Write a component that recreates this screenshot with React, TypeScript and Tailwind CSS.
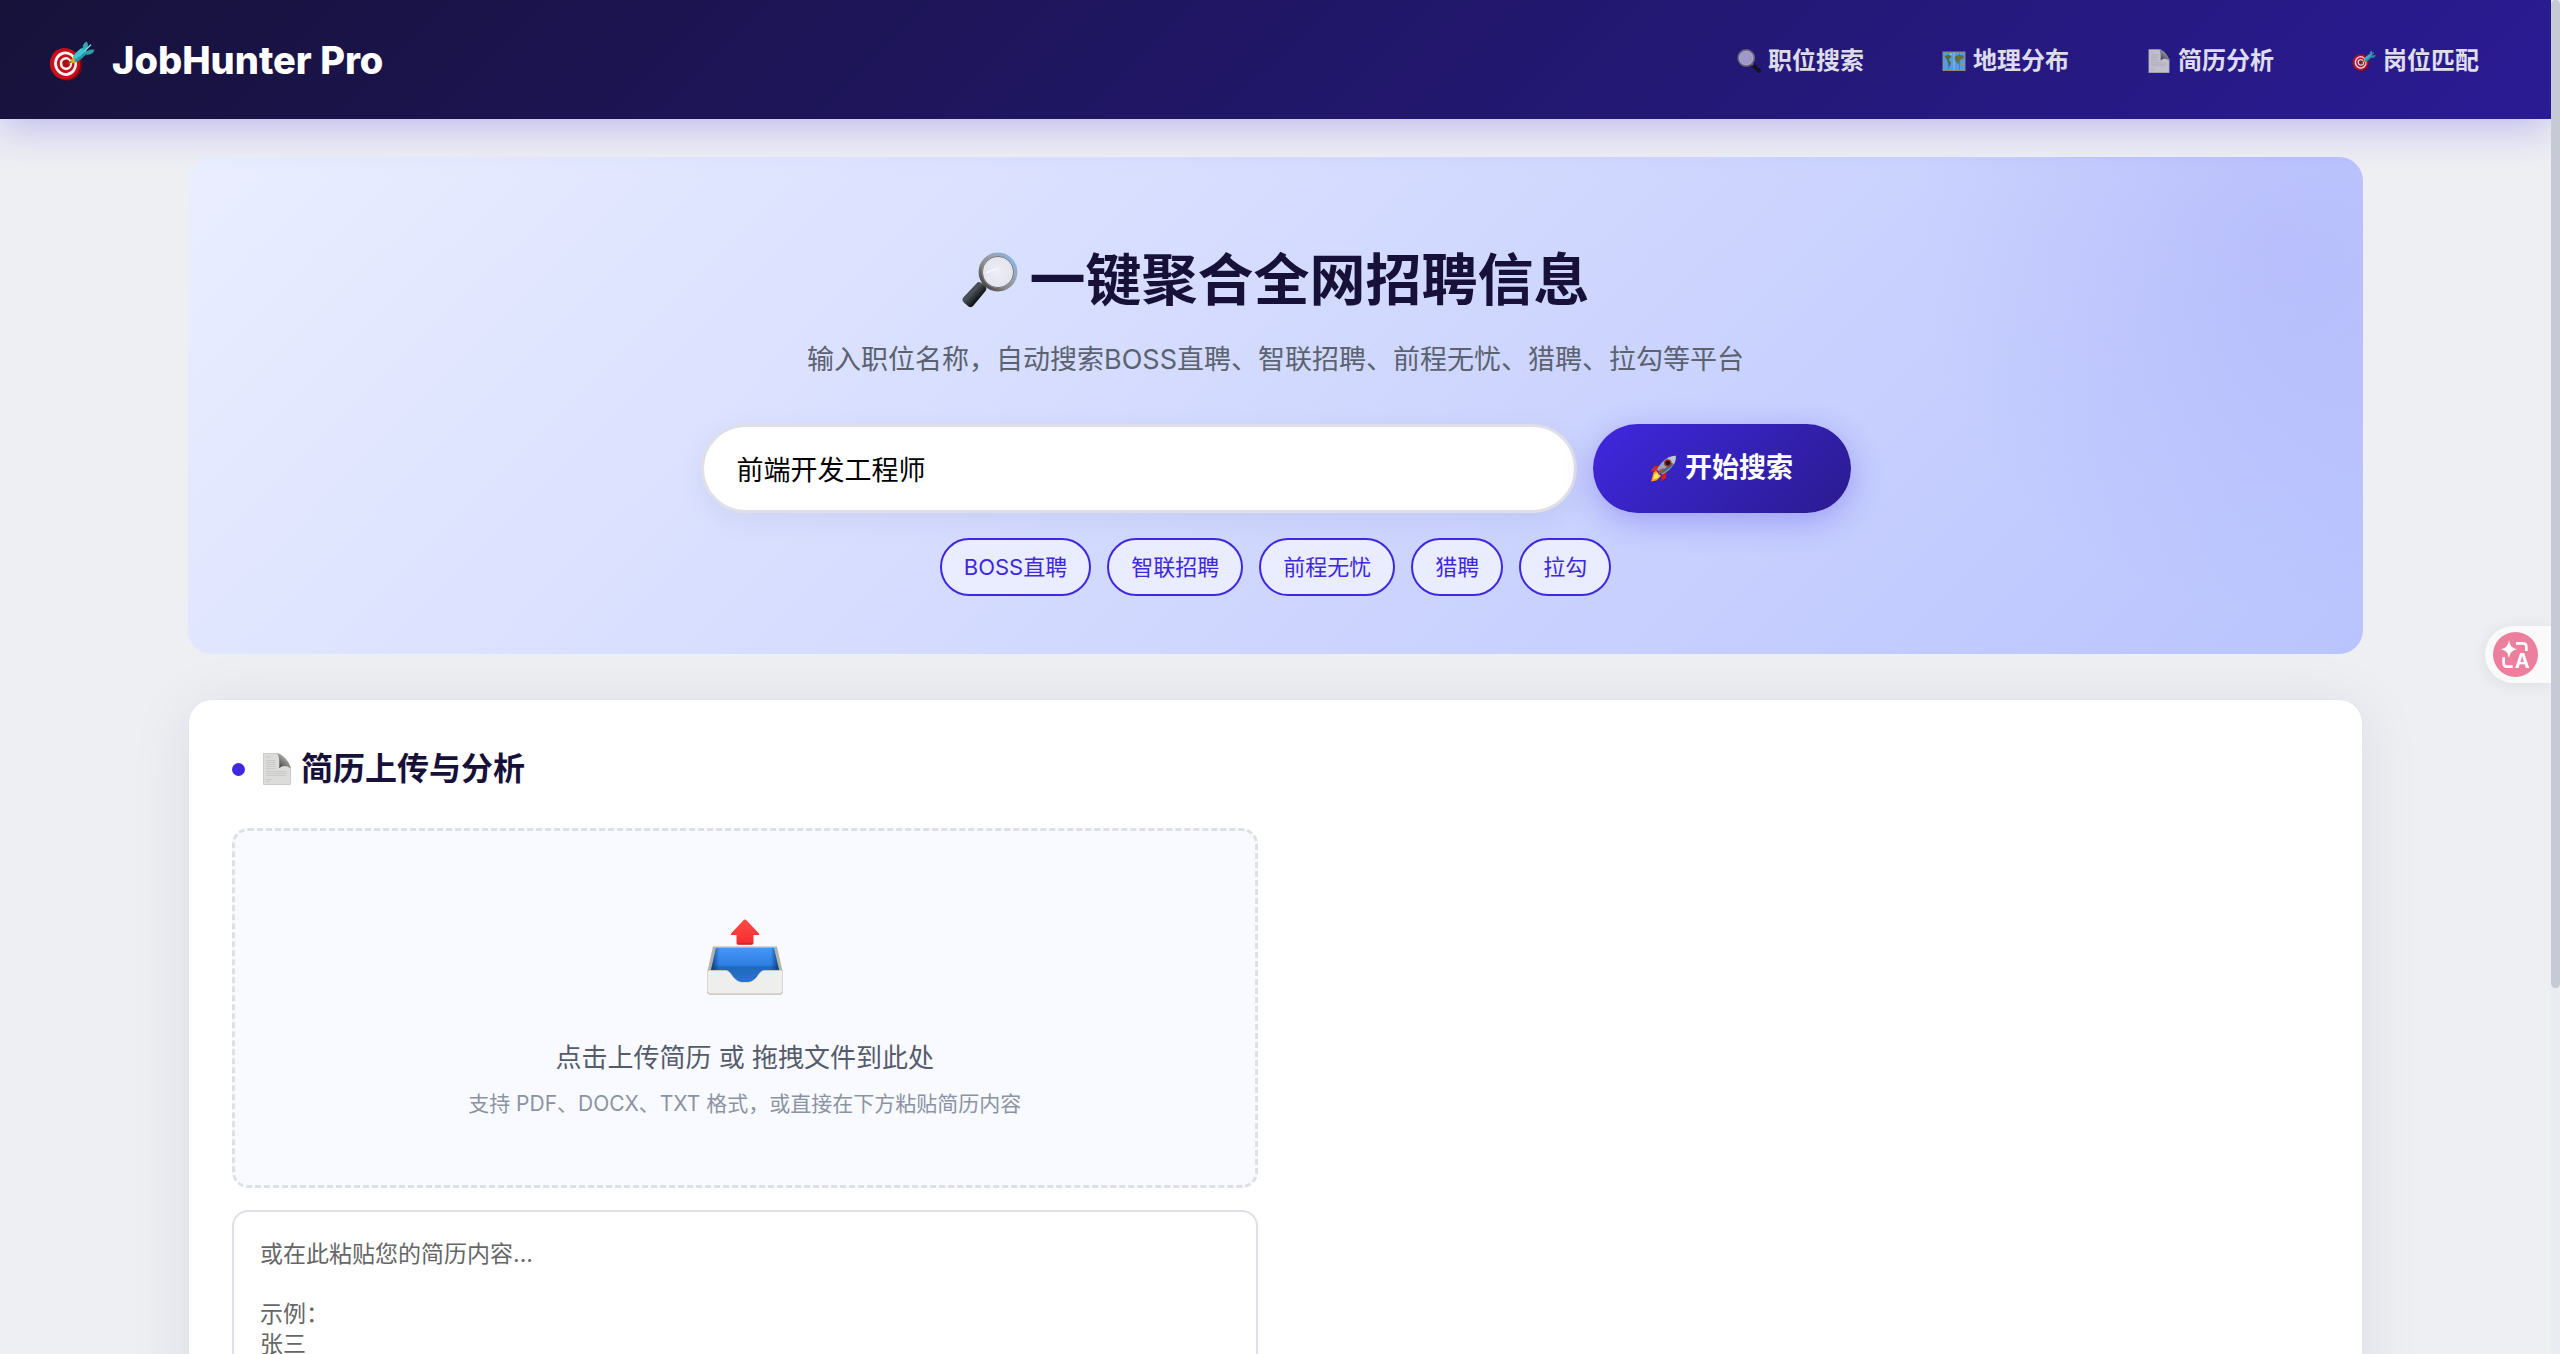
import React from "react";

type IconProps = { className?: string };

function TargetIcon({ className }: IconProps) {
  return (
    <svg viewBox="0 0 46 40" className={className} aria-hidden="true">
      <g transform="rotate(-12 17 23)">
        <ellipse cx="17.6" cy="23.8" rx="15.2" ry="16" fill="#7d0710" />
        <ellipse cx="16" cy="22.6" rx="15" ry="15.8" fill="#c8101c" />
        <ellipse cx="16.6" cy="22.6" rx="11.4" ry="12.2" fill="#f6f3f3" />
        <ellipse cx="16.8" cy="22.6" rx="8.8" ry="9.4" fill="#c4101c" />
        <ellipse cx="17" cy="22.6" rx="6.2" ry="6.6" fill="#f4efef" />
        <ellipse cx="17.2" cy="22.6" rx="3.8" ry="4" fill="#a90e18" />
      </g>
      <path d="M18.500 23.200 24 19.400" stroke="#7a5a10" strokeWidth="1.600" />
      <path d="m21.500 19 3.400-2.800 3.600 4.600-5.400 1.600Z" fill="#e3a91b" />
      <path d="M24 15.400C27.500 10.500 31 7.600 35 6.600l3 4.500C35 15.900 31 19.600 26.500 21.200Z" fill="#3cc6cf" />
      <path d="M25.500 18.800C28.500 17 33 13.500 37 10.400l1 .9C35 15.900 31 19.600 26.500 21.200Z" fill="#2397a3" />
      <path d="M34 8.800C33 5.400 34.400 2 37.400.400c2 1.600 2 5 0 9.400Z" fill="#35a5af" />
      <path d="M35.600 11.800c3-3 6.800-4 9.800-3-.4 3.600-5 5.600-9.400 4.800Z" fill="#2f9ba6" />
      <path d="m36 9.500 5.600-5.500" stroke="#6fe0e6" strokeWidth="1.400" strokeLinecap="round" />
    </svg>
  );
}

function MagnifierIcon({ className }: IconProps) {
  return (
    <svg viewBox="0 0 56 56" className={className} aria-hidden="true">
      <defs>
        <linearGradient id="rim" x1="0.1" y1="0.9" x2="0.9" y2="0.1">
          <stop offset="0" stopColor="#4b4746" />
          <stop offset="0.35" stopColor="#8c8887" />
          <stop offset="0.7" stopColor="#9aa5b3" />
          <stop offset="1" stopColor="#86b5e6" />
        </linearGradient>
        <linearGradient id="handle" x1="0" y1="0" x2="1" y2="1">
          <stop offset="0" stopColor="#15181b" />
          <stop offset="0.4" stopColor="#4d5459" />
          <stop offset="0.65" stopColor="#14171a" />
          <stop offset="1" stopColor="#000" />
        </linearGradient>
        <radialGradient id="lens">
          <stop offset="0" stopColor="#eeeef5" />
          <stop offset="1" stopColor="#e2e3ee" />
        </radialGradient>
      </defs>
      <path d="m19 36 4.500-5" stroke="#8d8a8a" strokeWidth="5" />
      <path
        d="M14.500 31.500q2-2.600 4.800-.4l3.600 3q2.600 2.200.6 4.800L11.500 53.500q-2.200 2.800-5 1L1.800 50.500q-2.600-2.300-.5-5Z"
        fill="url(#handle)"
      />
      <circle cx="36" cy="20" r="17.600" fill="url(#lens)" stroke="url(#rim)" strokeWidth="3.600" />
      <circle cx="36" cy="20" r="15.600" fill="none" stroke="#4f5056" strokeWidth="1" opacity="0.7" />
      <path d="M24 21c5-4 9-2 13-5" stroke="#fff" strokeWidth="1.500" fill="none" opacity="0.7" />
    </svg>
  );
}

function SmallMagnifierIcon({ className }: IconProps) {
  return (
    <svg viewBox="0 0 24 24" className={className} aria-hidden="true">
      <path d="m14.500 14.500 3 3" stroke="#8a8790" strokeWidth="2.400" />
      <path d="m17.200 17.200 5 4.800" stroke="#121117" strokeWidth="4" strokeLinecap="round" />
      <circle cx="9.200" cy="9" r="8" fill="#b5afd8" stroke="#77747f" strokeWidth="1.800" />
      <circle cx="9.200" cy="9" r="6.800" fill="none" stroke="#d5d1ea" strokeWidth="0.600" />
    </svg>
  );
}

function MapIcon({ className }: IconProps) {
  return (
    <svg viewBox="0 0 24 24" className={className} aria-hidden="true">
      <rect x="0.500" y="2.500" width="23" height="19.500" fill="#a3a077" />
      <path d="M1.300 3.300 6.500 4l5.500-.7 5.500.7 5.200-.7v17.600l-5.200-.7-5.500.7-5.500-.7-5.200.7Z" fill="#5cb4f5" />
      <path d="M6.500 4v16.200M17.500 4v16.200" stroke="#378ad4" strokeWidth="0.800" />
      <path d="M12 3.300v17.600" stroke="#a3dbff" strokeWidth="0.900" />
      <path d="M2.500 7 6 6l3.500 1L8.200 9 6.500 10.500l2.500 3-1.300 4.500-1.400-3.500-1.300-3.600Z" fill="#5f7726" />
      <path d="m13 7.500 3-1.500 5.500.3.500 2.200-2.500 2-2 .5-1.500 4.500-2-3-1.500-3Z" fill="#737e2c" />
      <path d="m7 5 2.500-.6L10 6.200Z" fill="#e6efe8" />
      <path d="m18.500 14.500 2.500-.5.700 2-2.200.8Z" fill="#d3a346" />
    </svg>
  );
}

function PageIcon({ className }: IconProps) {
  return (
    <svg viewBox="0 0 28 32" className={className} aria-hidden="true">
      <defs>
        <linearGradient id="curl" x1="1" y1="0" x2="0.200" y2="1">
          <stop offset="0" stopColor="#dcdcdc" />
          <stop offset="0.500" stopColor="#8f8f8f" />
          <stop offset="1" stopColor="#3c3c3c" />
        </linearGradient>
      </defs>
      <path d="M.5.500h13.500c2 0 3 1 4 2L27.500 14v17.500H.5Z" fill="#dcdcdb" stroke="#c2c2c2" strokeWidth="0.800" />
      <path d="M13.500.500c3 1.500 3 8 2.700 14.800 3-3 8-3.300 11.300.2C27 10 22.500 4.500 18.500 2Q16.500.5 13.500.5Z" fill="url(#curl)" />
      <path
        d="M3 4h5M3 7.500h9.500M3 9.500h9.500M3 11.500h9.500M3 13.500h9.500M3 15.500h9.500M3 18.500h21M3 20.500h21M3 22.500h20M3 26.500h6M3 28.500h4"
        stroke="#c0c0c0"
        strokeWidth="0.700"
      />
    </svg>
  );
}

function RocketIcon({ className }: IconProps) {
  return (
    <svg viewBox="0 0 27 27" className={className} aria-hidden="true">
      <path d="M10.500 10.500 4 11.600.5 16.500l6.500-.8Z" fill="#e0261b" />
      <path d="m16.500 16.500-.6 6.500-4.900 3.500.8-6.500Z" fill="#d51e17" />
      <path d="M6 15.500 3.500 17.500l-2 7.500-.5 1.500 5.500-1 4.500-4.500Z" fill="#ff9a1a" />
      <path d="m6.500 17.500-2 2-1.500 5 5-1.500 1.500-2.500Z" fill="#ffe85a" />
      <path d="M26 .8C19 1 12 5 7 14.500l5 5C21 15 26.500 8 26 .8Z" fill="#8faabd" />
      <path d="M26 .8c0 7-5.500 13.500-14.800 18l-2-2C17 13 23 7 26 .8Z" fill="#476a86" />
      <path d="M25.800.8c-3 .2-5.500.8-8 2 1 3 3.500 5.500 6.200 6.200 1.300-2.700 2-5.300 1.800-8.200Z" fill="#b9c9d4" />
      <circle cx="17.800" cy="8" r="3.800" fill="#c22a22" />
      <circle cx="17.800" cy="8" r="2.400" fill="#15171c" />
      <path d="m14.500 13-6.800 7.500 2-6Z" fill="#e23a2b" />
    </svg>
  );
}

function OutboxIcon({ className }: IconProps) {
  return (
    <svg viewBox="0 0 76 76" className={className} aria-hidden="true">
      <defs>
        <linearGradient id="arrow" x1="0" y1="0" x2="0" y2="1">
          <stop offset="0" stopColor="#ff4b47" />
          <stop offset="0.900" stopColor="#f62f30" />
          <stop offset="1" stopColor="#b9151a" />
        </linearGradient>
        <linearGradient id="inside" x1="0" y1="0" x2="0" y2="1">
          <stop offset="0" stopColor="#4595fa" />
          <stop offset="0.500" stopColor="#2f7fe2" />
          <stop offset="0.560" stopColor="#1f68be" />
          <stop offset="1" stopColor="#2874d0" />
        </linearGradient>
        <linearGradient id="side" x1="0" y1="0" x2="1" y2="0">
          <stop offset="0" stopColor="#0b3f78" />
          <stop offset="0.120" stopColor="#0b3f78" stopOpacity="0" />
          <stop offset="0.880" stopColor="#0b3f78" stopOpacity="0" />
          <stop offset="1" stopColor="#0b3f78" />
        </linearGradient>
      </defs>
      <path d="M38 .5q.8 0 1.500.8L52 14.500q.8 1.500-.8 1.500H46.500v8q0 1.800-1.800 1.800H31.300q-1.800 0-1.800-1.800V16H24.800q-1.600 0-.8-1.500L36.500 1.300q.7-.8 1.500-.8Z" fill="url(#arrow)" />
      <path d="M6 27.500h64L75.500 52H.5Z" fill="#b5b2aa" />
      <path d="M9 29h58l5 22-17 12H21L4 51Z" fill="url(#inside)" />
      <path d="M9 29h58l5 22H4Z" fill="url(#side)" />
      <path
        d="M.5 51.500h18c4 0 5.500 4 8 7 3 3.600 6.500 5.300 11.500 5.300s8.500-1.700 11.500-5.300c2.500-3 4-7 8-7h18V73q0 2.500-2.500 2.500H3Q.5 75.500.5 73Z"
        fill="#eeeeec"
        stroke="#cfcecb"
        strokeWidth="0.800"
      />
      <path d="M1 73q0 2 2 2h70q2 0 2-2" fill="none" stroke="#c2c1be" strokeWidth="1" />
    </svg>
  );
}

function TranslateIcon({ className }: IconProps) {
  return (
    <svg viewBox="0 0 135 135" className={className} aria-hidden="true">
      <circle cx="67.500" cy="67.500" r="67.500" fill="#eb7f9d" />
      <path d="M48 24c3 17 8 24 25 27.500C56 55 51 62 48 79c-3-17-8-24-25-27.500C40 48 45 41 48 24Z" fill="#fff" />
      <path d="M69 34h21q10 0 10 10v13M32 76v18q0 10 10 10h17" fill="none" stroke="#fff" strokeWidth="8" />
      <text x="88" y="108" textAnchor="middle" fontSize="60" fontWeight="700" fill="#fff">
        A
      </text>
    </svg>
  );
}

const navItems = [
  { label: "职位搜索", Icon: SmallMagnifierIcon },
  { label: "地理分布", Icon: MapIcon },
  { label: "简历分析", Icon: PageIcon },
  { label: "岗位匹配", Icon: TargetIcon },
];

const platforms = ["BOSS直聘", "智联招聘", "前程无忧", "猎聘", "拉勾"];

const resumePlaceholder = `或在此粘贴您的简历内容...

示例：
张三
前端开发工程师
5年工作经验
技能：React、TypeScript、Node.js`;

function Header() {
  return (
    <header className="relative z-10 flex items-center justify-between bg-[linear-gradient(135deg,#17123a_0%,#2a1b94_100%)] px-12 pt-[37px] pb-[35px] shadow-[0_8px_40px_rgba(64,40,224,0.28)]">
      <a href="#home" className="flex items-center gap-4 text-[38px] leading-[47px] font-extrabold text-white">
        <TargetIcon className="h-10 w-12" />
        JobHunter Pro
      </a>
      <nav className="flex gap-[30px]">
        {navItems.map(({ label, Icon }) => (
          <a key={label} href={"#" + label} className="flex items-center gap-[7px] px-6 text-2xl font-bold text-white opacity-85">
            <Icon className="size-6" />
            {label}
          </a>
        ))}
      </nav>
    </header>
  );
}

function Hero() {
  return (
    <section className="rounded-3xl bg-[radial-gradient(circle_370px_at_calc(100%_-_80px)_90px,rgba(64,40,224,0.08),rgba(64,40,224,0)),linear-gradient(135deg,#eaeeff_0%,#b9c4fe_100%)] px-12 pt-[87px] pb-[58px]">
      <h1 className="flex items-center justify-center gap-3 text-[56px] leading-[72px] font-bold text-[#17113a]">
        <MagnifierIcon className="size-14" />
        一键聚合全网招聘信息
      </h1>
      <p className="mt-6 text-center text-[27px] leading-10 text-[#5b6270]">
        输入职位名称，自动搜索BOSS直聘、智联招聘、前程无忧、猎聘、拉勾等平台
      </p>
      <form className="mx-auto mt-11 flex w-full max-w-[1150px] gap-4" onSubmit={(e) => e.preventDefault()}>
        <input
          type="text"
          aria-label="职位名称"
          defaultValue="前端开发工程师"
          className="h-[89px] min-w-0 flex-1 rounded-full border-3 border-[#dfe0e7] bg-white px-[33px] text-[27px] text-black shadow-[0_8px_30px_rgba(20,20,80,0.06)] outline-none"
        />
        <button
          type="submit"
          className="flex h-[89px] w-[258px] items-center justify-center gap-2 rounded-full bg-[linear-gradient(135deg,#3f28e0_0%,#2a1b8e_100%)] text-[27px] font-bold text-white shadow-[0_8px_32px_rgba(64,40,224,0.3)]"
        >
          <RocketIcon className="size-[27px]" />
          开始搜索
        </button>
      </form>
      <div className="mt-[25px] flex flex-wrap justify-center gap-4">
        {platforms.map((name) => (
          <button
            key={name}
            type="button"
            className="h-[58px] rounded-full border-2 border-[#3f28e0] bg-[#e9edff] px-[22px] text-[22px] text-[#3f28e0]"
          >
            {name}
          </button>
        ))}
      </div>
    </section>
  );
}

function ResumeCard() {
  return (
    <section className="mt-[45px] rounded-3xl border border-[#e4e5ea] bg-white px-[43px] pt-[46px] pb-11 shadow-[0_8px_64px_rgba(20,20,50,0.08)]">
      <h2 className="flex items-center text-[32px] leading-[46px] font-semibold text-[#17113a]">
        <span className="mr-[18px] size-[13px] rounded-full bg-[#3f28e0]" />
        <PageIcon className="mr-[10px] h-8 w-7" />
        简历上传与分析
      </h2>
      <div className="mt-9 grid grid-cols-2 gap-9">
        <div>
          <label className="flex cursor-pointer flex-col items-center rounded-2xl border-3 border-dashed border-[#dfe0e6] bg-[#f9faff] pt-[88px] pb-[65px]">
            <OutboxIcon className="size-[76px]" />
            <span className="mt-[43px] text-[26px] leading-10 text-[#565b6c]">点击上传简历 或 拖拽文件到此处</span>
            <span className="mt-[10px] text-[21px] leading-8 text-[#8b93a3]">
              支持 PDF、DOCX、TXT 格式，或直接在下方粘贴简历内容
            </span>
            <input type="file" className="sr-only" />
          </label>
          <textarea
            aria-label="简历内容"
            placeholder={resumePlaceholder}
            className="mt-[22px] block h-[400px] w-full resize-none rounded-2xl border-2 border-[#dfdfe7] bg-white px-[26px] py-[27px] text-[23px] leading-[30px] outline-none placeholder:text-[#666666]"
          />
        </div>
      </div>
    </section>
  );
}

export default function App() {
  return (
    <div className="flex h-screen bg-[#edeff3] font-['Inter','Noto_Sans_CJK_SC',sans-serif]">
      <div className="min-w-0 flex-1 overflow-y-auto [scrollbar-width:none]">
        <Header />
        <main className="mx-auto w-full max-w-[2175px] pt-[38px] pb-[205px]">
          <Hero />
          <ResumeCard />
        </main>
      </div>
      <div className="w-[9px] bg-[#e9ecf3]" aria-hidden="true">
        <div className="h-[73%] rounded-full bg-[#c6cad4]" />
      </div>
      <button
        type="button"
        aria-label="翻译"
        className="fixed top-[626px] right-[9px] z-20 flex h-[57px] w-[66px] items-center rounded-l-full bg-[#fafafa] pl-2 shadow-[0_2px_16px_rgba(0,0,0,0.08)] [clip-path:inset(-24px_0_-24px_-24px)]"
      >
        <TranslateIcon className="size-[45px]" />
      </button>
    </div>
  );
}
